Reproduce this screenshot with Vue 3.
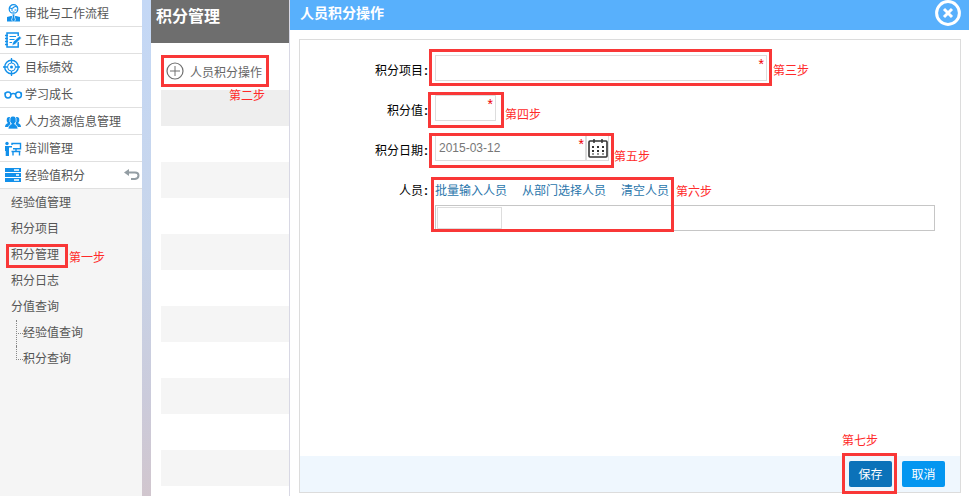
<template>
  <div class="page">
    <nav class="sidebar">
      <ul class="modules">
        <li v-for="item in modules" :key="item.name">
          <a href="#">
            <svg class="icon" width="18" height="18" viewBox="0 0 18 18" fill="none" stroke="#1290ea" stroke-width="1.5">
              <template v-if="item.icon === 'user'">
                <circle cx="9.500" cy="5" r="4.300" stroke-width="1.200" />
                <path d="M5.500 3.500q2 2 4 0t4 0M7 6h2M10.500 6h2M8.500 8h2" stroke-width="1.100" />
                <path d="M3 17.500v-4.500l4-1h5l4 1v4.500z" fill="#1290ea" stroke="none" />
                <path d="M8 10h3l-.5 3 1 3-2 2-2-2 1-3z" fill="#1290ea" stroke="#fff" stroke-width=".7" />
              </template>
              <template v-else-if="item.icon === 'note'">
                <path d="M14.200 11v5H3V2h11.200v3M1 4.500h3M1 7.500h3M1 10.500h3M1 13.500h3" />
                <path d="M5.500 5.500h6.500M5.500 8.500h5M5.500 11.500h2.500" stroke-width="1.200" />
                <path d="M8 14.500l1-3.500 6.500-6 2 2-6.500 6.500z" fill="#1290ea" stroke="#fff" stroke-width=".6" />
              </template>
              <template v-else-if="item.icon === 'target'">
                <circle cx="7.500" cy="9" r="6.800" stroke-width="1.400" />
                <circle cx="7.500" cy="9" r="4" stroke-width="1" />
                <circle cx="7.500" cy="9" r="1.500" fill="#1290ea" stroke="none" />
                <path d="M7.500 0v5M7.500 13v5M-1 9h4.500M11.500 9H16" stroke-width="1.300" />
              </template>
              <template v-else-if="item.icon === 'glasses'">
                <circle cx="4" cy="10" r="2.900" />
                <circle cx="14.500" cy="10" r="2.900" />
                <path d="M6.800 9.500q2.500-2 4.900 0M1.200 9.500V7.500M17.300 9.500V7.500" />
              </template>
              <g v-else-if="item.icon === 'team'" fill="#1290ea" stroke="none">
                <path d="M1 15q0-3 3-4-2-1.500-1-5 2-2 4 0 1 3-1 5l2 4z" />
                <path d="M17 15q0-3-3-4 2-1.500 1-5-2-2-4 0-1 3 1 5l-2 4z" />
                <path d="M4 17q0-4 3.500-5-2.500-2-1.500-6 3-4 6 0 1 4-1.500 6 3.500 1 3.500 5z" stroke="#fff" stroke-width=".7" />
              </g>
              <template v-else-if="item.icon === 'train'">
                <circle cx="3" cy="4.500" r="1.700" fill="#1290ea" stroke="none" />
                <path d="M1 7h7v1.600H5V17H1.700v-5H1z" fill="#1290ea" stroke="none" />
                <path d="M8 6V4.500h8.500v5.200H9M7.500 12.500h9M9 12.500v4M15.500 12.500v4M12 10v3" stroke-width="1.400" />
              </template>
              <template v-else>
                <path d="M1 2h16v4H1zM1 7h16v4H1zM1 12h16v4H1z" fill="#1290ea" stroke="none" />
                <path d="M10 4h5M12 9h3M10 14h5" stroke="#fff" stroke-width="1.300" />
              </template>
            </svg>
            <span>{{ item.name }}</span>
            <svg v-if="item.open" class="back" width="16" height="12" viewBox="0 0 16 12">
              <path d="M4 3.500h7q3.500 0 3.500 3T11 10H7" fill="none" stroke="#939da3" stroke-width="2" />
              <path d="M0 3.500L5 0v7z" fill="#939da3" />
            </svg>
          </a>
        </li>
      </ul>
      <ul class="submenu">
        <li v-for="sub in subs" :key="sub">
          <a href="#" :class="{ marked: sub === '积分管理' }">{{ sub }}<i v-if="sub === '积分管理'" class="frame"></i><em v-if="sub === '积分管理'" class="step">第一步</em></a>
        </li>
      </ul>
      <ul class="tree">
        <li><a href="#">经验值查询</a></li>
        <li><a href="#">积分查询</a></li>
      </ul>
    </nav>
    <div class="strip"></div>

    <section class="list">
      <h1>积分管理</h1>
      <div class="rows">
        <button class="action marked" type="button">
          <svg width="18" height="18" viewBox="0 0 18 18" fill="none" stroke="#707070">
            <circle cx="9" cy="9" r="8" stroke-width="1.200" />
            <path d="M4 9h10M9 4v10" />
          </svg>
          人员积分操作
          <i class="frame"></i>
          <em class="step">第二步</em>
        </button>
        <div v-for="n in 11" :key="n" class="row"></div>
      </div>
    </section>

    <main class="dialog">
      <header>
        <h2>人员积分操作</h2>
        <button class="close" type="button" aria-label="关闭">
          <svg width="26" height="26" viewBox="0 0 26 26" fill="none" stroke="#fff">
            <circle cx="13" cy="13" r="11.400" stroke-width="3" />
            <path d="M9 9l8 8M17 9l-8 8" stroke-width="3" />
          </svg>
        </button>
      </header>
      <form class="panel" @submit.prevent>
        <div class="fields">
          <div class="field">
            <label for="project">积分项目<b>:</b></label>
            <div class="marked control project">
              <input id="project" v-model="project" type="text">
              <span class="star">*</span>
              <i class="frame"></i>
              <em class="step">第三步</em>
            </div>
          </div>
          <div class="field">
            <label for="score">积分值<b>:</b></label>
            <div class="marked control score">
              <input id="score" v-model="score" type="text">
              <span class="star">*</span>
              <i class="frame"></i>
              <em class="step">第四步</em>
            </div>
          </div>
          <div class="field">
            <label for="date">积分日期<b>:</b></label>
            <div class="marked control date">
              <input id="date" v-model="date" type="text">
              <span class="star">*</span>
              <button class="calendar" type="button" aria-label="选择日期">
                <svg width="20" height="20" viewBox="0 0 20 20" fill="none" stroke="#333">
                  <rect x="1" y="3" width="18" height="16" rx="1" stroke-width="1.600" />
                  <path d="M6 1v4M14 1v4" stroke-width="1.500" />
                  <path d="M4 9h12M4 13h12" stroke-width="2" stroke-dasharray="2 3" />
                  <path d="M4 16h12" stroke-width="1" stroke-dasharray="2 3" />
                </svg>
              </button>
              <i class="frame"></i>
              <em class="step">第五步</em>
            </div>
          </div>
          <div class="field">
            <label for="people">人员<b>:</b></label>
            <div class="marked people">
              <div class="links">
                <a href="#">批量输入人员</a>
                <a href="#">从部门选择人员</a>
                <a href="#">清空人员</a>
              </div>
              <div class="picker"><input id="people" v-model="people" type="text"></div>
              <i class="frame"></i>
              <em class="step">第六步</em>
            </div>
          </div>
        </div>
        <footer>
          <div class="marked save">
            <button class="btn primary" type="submit">保存</button>
            <i class="frame"></i>
            <em class="step">第七步</em>
          </div>
          <button class="btn" type="button">取消</button>
        </footer>
      </form>
    </main>
  </div>
</template>

<script setup>
import { ref } from 'vue'

const modules = [
  { name: '审批与工作流程', icon: 'user' },
  { name: '工作日志', icon: 'note' },
  { name: '目标绩效', icon: 'target' },
  { name: '学习成长', icon: 'glasses' },
  { name: '人力资源信息管理', icon: 'team' },
  { name: '培训管理', icon: 'train' },
  { name: '经验值积分', icon: 'server', open: true }
]
const subs = ['经验值管理', '积分项目', '积分管理', '积分日志', '分值查询']

const project = ref('')
const score = ref('')
const date = ref('2015-03-12')
const people = ref('')
</script>

<style>
body {
  background: #fff;
}
</style>

<style scoped>
.page, .page * {
  box-sizing: border-box;
}
.page {
  display: flex;
  min-height: 100vh;
  font-family: "Liberation Sans", "Noto Sans CJK SC", sans-serif;
  font-size: 12px;
  color: #555;
}
ul {
  list-style: none;
  margin: 0;
  padding: 0;
}
a {
  color: inherit;
  text-decoration: none;
}
button {
  font: inherit;
  border: 0;
  padding: 0;
  cursor: pointer;
}

/* sidebar */
.sidebar {
  flex: 0 0 142px;
  background: #f5f5f5;
}
.modules a {
  display: flex;
  align-items: center;
  gap: 3px;
  height: 27px;
  padding-left: 4px;
  background: #fff;
  border-bottom: 1px solid #e0e0e0;
}
.modules span {
  padding-bottom: 2px;
}
.icon {
  overflow: visible;
}
.back {
  margin-left: auto;
  margin-right: 2px;
}
.submenu {
  padding-top: 1px;
}
.submenu a {
  display: block;
  width: 50px;
  margin-left: 11px;
  line-height: 26px;
  white-space: nowrap;
}
.tree {
  margin-left: 16px;
}
.tree a {
  line-height: 26px;
}
.tree li {
  position: relative;
  padding-left: 7px;
}
.tree li::before {
  content: "";
  position: absolute;
  left: 0;
  top: 0;
  width: 6px;
  height: 13px;
  border-left: 1px dotted #888;
  border-bottom: 1px dotted #888;
}
.tree li:first-child::after {
  content: "";
  position: absolute;
  left: 0;
  top: 13px;
  height: 13px;
  border-left: 1px dotted #888;
}
.strip {
  flex: 0 0 9px;
  background: linear-gradient(#c4d8f6, #c8d5ea 50%, #cbcbdb 80%, #d1c6ce);
}

/* tutorial marks, laid over the control they point at */
.marked {
  position: relative;
}
.frame {
  position: absolute;
  border: 3px solid #f93737;
  pointer-events: none;
}
.step {
  position: absolute;
  font-style: normal;
  line-height: 18px;
  color: #ff2a2a;
  white-space: nowrap;
}
.submenu .frame {
  top: 2px;
  bottom: 0;
  left: -5px;
  right: -7px;
}
.submenu .step {
  top: 7px;
  left: 58px;
}

/* list column */
.list {
  flex: 0 0 138px;
}
.list h1 {
  height: 43px;
  margin: 0;
  padding-left: 5px;
  line-height: 34px;
  font-size: 16px;
  color: #fff;
  background: #6e6e6e;
}
.rows {
  padding: 11px 0 0 10px;
}
.action {
  display: flex;
  align-items: center;
  gap: 6px;
  width: 108px;
  height: 36px;
  padding: 0 0 2px 5px;
  background: none;
  color: #666;
  white-space: nowrap;
}
.action .frame {
  top: 1px;
  bottom: 3px;
  left: 0;
  right: 0;
}
.action .step {
  top: 33px;
  left: 68px;
}
.row {
  height: 36px;
}
.row:nth-child(even) {
  background: #f5f5f5;
}
.row:nth-child(2) {
  background: #eee;
}

/* dialog */
.dialog {
  flex: 1;
  min-width: 0;
  display: flex;
  flex-direction: column;
  border-left: 1px solid #d8d8e4;
}
.dialog header {
  display: flex;
  justify-content: space-between;
  align-items: flex-start;
  height: 30px;
  padding: 0 8px 0 10px;
  background: #58b0fc;
}
.dialog h2 {
  margin: 0;
  font-size: 14px;
  line-height: 26px;
  color: #fff;
}
.close {
  height: 26px;
  background: none;
}
.panel {
  flex: 1;
  display: flex;
  flex-direction: column;
  margin: 9px 8px 3px 9px;
  border: 1px solid #dcdcdc;
}
.fields {
  flex: 1;
  display: flex;
  flex-direction: column;
  gap: 10px;
  padding: 15px 25px 15px 0;
}
.field {
  display: grid;
  grid-template-columns: 129px 1fr;
  grid-template-rows: minmax(30px, auto);
  column-gap: 6px;
  align-items: start;
}
.field label {
  line-height: 32px;
  height: 30px;
  text-align: right;
  color: #000;
}
.field b {
  padding: 0 1px;
}
.control {
  display: flex;
  height: 26px;
}
.control input {
  flex: 1;
  min-width: 0;
  border: 1px solid #ddd;
  padding: 0 3px;
  font: inherit;
  color: #777;
  outline: none;
}
.star {
  position: absolute;
  top: 0;
  right: 3px;
  font-size: 14px;
  line-height: 18px;
  color: #e00;
}
.project {
  width: 332px;
}
.score {
  width: 61px;
}
.date {
  width: 174px;
}
.date .star {
  right: 25px;
}
.calendar {
  display: grid;
  place-items: center;
  width: 23px;
  background: #fff;
  border: 1px solid #ddd;
}
.project .frame {
  inset: -6px -5px -5px -6px;
}
.project .step {
  top: 7px;
  left: 338px;
}
.score .frame {
  inset: -3px -8px -7px -7px;
}
.score .step {
  top: 11px;
  left: 70px;
}
.date .frame {
  inset: -2px -5px -7px -6px;
}
.date .step {
  top: 13px;
  left: 179px;
}
.links {
  display: flex;
  gap: 15px;
  height: 30px;
  line-height: 32px;
  color: #2a76ab;
}
.picker {
  display: flex;
  height: 26px;
  padding: 1px;
  border: 1px solid #c6c6c6;
}
.picker input {
  width: 65px;
  border: 1px solid #ddd;
  outline: none;
}
.people .frame {
  top: 2px;
  bottom: -1px;
  left: -4px;
  width: 243px;
}
.people .step {
  top: 8px;
  left: 241px;
}
.dialog footer {
  display: flex;
  justify-content: flex-end;
  align-items: center;
  gap: 10px;
  height: 36px;
  padding-right: 15px;
  background: #eff7fe;
}
.save {
  display: flex;
}
.btn {
  width: 43px;
  height: 26px;
  padding-bottom: 2px;
  border-radius: 2px;
  color: #fff;
  background: #0496f0;
}
.btn.primary {
  background: #0b72b9;
}
.save .frame {
  inset: -8px -5px -7px -7px;
}
.save .step {
  top: -29px;
  left: -7px;
}
</style>
